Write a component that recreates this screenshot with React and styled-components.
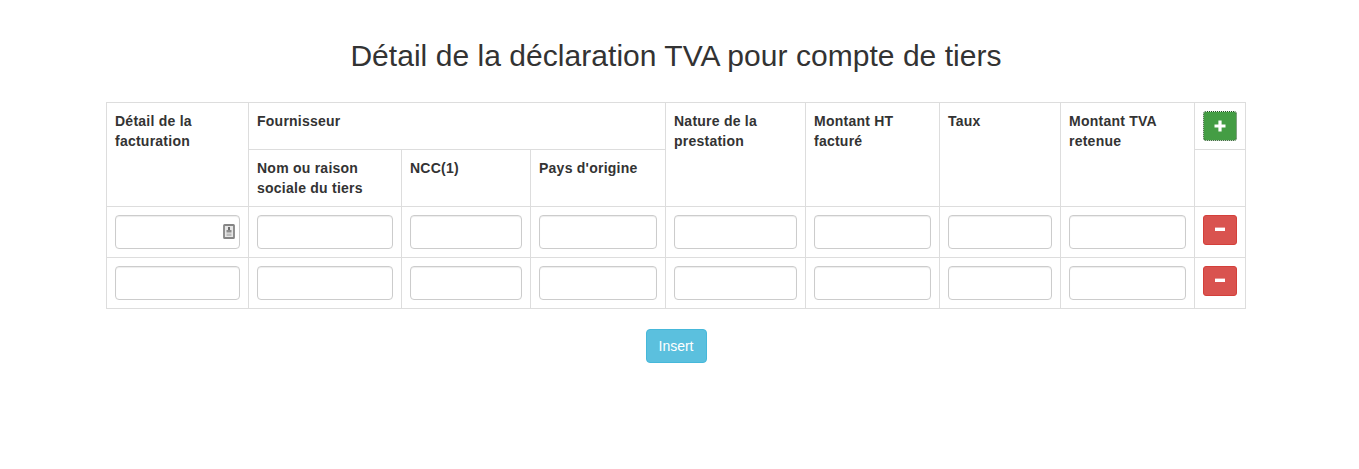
import styled, { createGlobalStyle } from "styled-components";

const GlobalStyle = createGlobalStyle`
  * {
    box-sizing: border-box;
  }

  body {
    margin: 0;
    background: #fff;
    color: #333;
    font-family: "Liberation Sans", Arial, sans-serif;
    font-size: 14px;
    line-height: 20px;
  }
`;

const COLUMNS = [142, 153, 129, 135, 140, 134, 121, 134, 51];

const PlusIcon = () => (
  <svg width="12" height="12" viewBox="0 0 12 12" fill="#fff">
    <path d="M4.4 0.5h3.2v3.9h3.9v3.2H7.6v3.9H4.4V7.6H0.5V4.4h3.9z" />
  </svg>
);

const MinusIcon = () => (
  <svg width="12" height="12" viewBox="0 0 12 12" fill="#fff">
    <rect x="1" y="3.6" width="10" height="3.4" />
  </svg>
);

const FillIcon = () => (
  <svg width="12" height="15" viewBox="0 0 12 15">
    <rect x="1" y="1" width="10" height="13" fill="#e6e6e6" stroke="#858585" strokeWidth="1.8" rx="0.6" />
    <rect x="5" y="3" width="2" height="3" fill="#6e6e6e" />
    <rect x="3.5" y="6" width="5" height="2.5" fill="#8c8c8c" />
    <rect x="3.5" y="9.5" width="5" height="2.5" fill="#bdbdbd" />
  </svg>
);

const Row = ({ first }) => (
  <tr>
    {COLUMNS.slice(0, 8).map((width, index) => (
      <Cell key={width + "-" + index}>
        <InputWrap>
          <TextInput />
          {first && index === 0 && (
            <FillBadge>
              <FillIcon />
            </FillBadge>
          )}
        </InputWrap>
      </Cell>
    ))}
    <Cell>
      <ActionButton $variant="remove">
        <MinusIcon />
      </ActionButton>
    </Cell>
  </tr>
);

const App = () => {
  return (
    <Page>
      <GlobalStyle />
      <Title>Détail de la déclaration TVA pour compte de tiers</Title>
      <Table>
        <colgroup>
          {COLUMNS.map((width, index) => (
            <col key={index} style={{ width }} />
          ))}
        </colgroup>
        <thead>
          <tr>
            <Head rowSpan={2}>Détail de la facturation</Head>
            <Head colSpan={3}>Fournisseur</Head>
            <Head rowSpan={2}>Nature de la prestation</Head>
            <Head rowSpan={2}>Montant HT facturé</Head>
            <Head rowSpan={2}>Taux</Head>
            <Head rowSpan={2}>Montant TVA retenue</Head>
            <Head>
              <ActionButton $variant="add">
                <PlusIcon />
              </ActionButton>
            </Head>
          </tr>
          <tr>
            <Head>Nom ou raison sociale du tiers</Head>
            <Head>NCC(1)</Head>
            <Head>Pays d'origine</Head>
            <Head />
          </tr>
        </thead>
        <tbody>
          <Row first />
          <Row />
        </tbody>
      </Table>
      <Footer>
        <InsertButton>Insert</InsertButton>
      </Footer>
    </Page>
  );
};

export default App;

const Page = styled.div`
  width: 1246px;
  padding-left: 106px;
  padding-top: 39px;
`;

const Title = styled.h2`
  margin: 0 0 30px;
  font-size: 30px;
  line-height: 33px;
  font-weight: 400;
  letter-spacing: 0.04px;
  text-align: center;
  color: #333;
`;

const Table = styled.table`
  width: 1139px;
  table-layout: fixed;
  border-collapse: collapse;
  border-spacing: 0;
`;

const Head = styled.th`
  padding: 8px;
  border: 1px solid #ddd;
  font-weight: 700;
  letter-spacing: 0.24px;
  text-align: left;
  vertical-align: top;
  line-height: 20px;
`;

const Cell = styled.td`
  padding: 8px;
  border: 1px solid #ddd;
  vertical-align: top;
`;

const InputWrap = styled.div`
  position: relative;
  height: 34px;
`;

const TextInput = styled.input`
  display: block;
  width: 100%;
  height: 34px;
  padding: 6px 12px;
  background: #fff;
  border: 1px solid #ccc;
  border-radius: 4px;
  box-shadow: inset 0 1px 1px rgba(0, 0, 0, 0.075);
  outline: none;
`;

const FillBadge = styled.span`
  position: absolute;
  top: 9px;
  right: 5px;
  display: flex;
`;

const ActionButton = styled.button`
  display: flex;
  align-items: center;
  justify-content: center;
  width: 34px;
  height: 30px;
  padding: 0;
  border-radius: 3px;
  border: 1px solid ${(p) => (p.$variant === "add" ? "#255625" : "#d43f3a")};
  background: ${(p) => (p.$variant === "add" ? "#449d44" : "#d9534f")};
  outline: ${(p) => (p.$variant === "add" ? "1px dotted #dfeedf" : "none")};
  outline-offset: -1px;
`;

const Footer = styled.div`
  display: flex;
  justify-content: center;
  width: 1140px;
  margin-top: 20px;
`;

const InsertButton = styled.button`
  width: 61px;
  height: 34px;
  padding: 6px 12px;
  font-family: inherit;
  font-size: 14px;
  line-height: 20px;
  color: #fff;
  background: #5bc0de;
  border: 1px solid #46b8da;
  border-radius: 4px;
`;
